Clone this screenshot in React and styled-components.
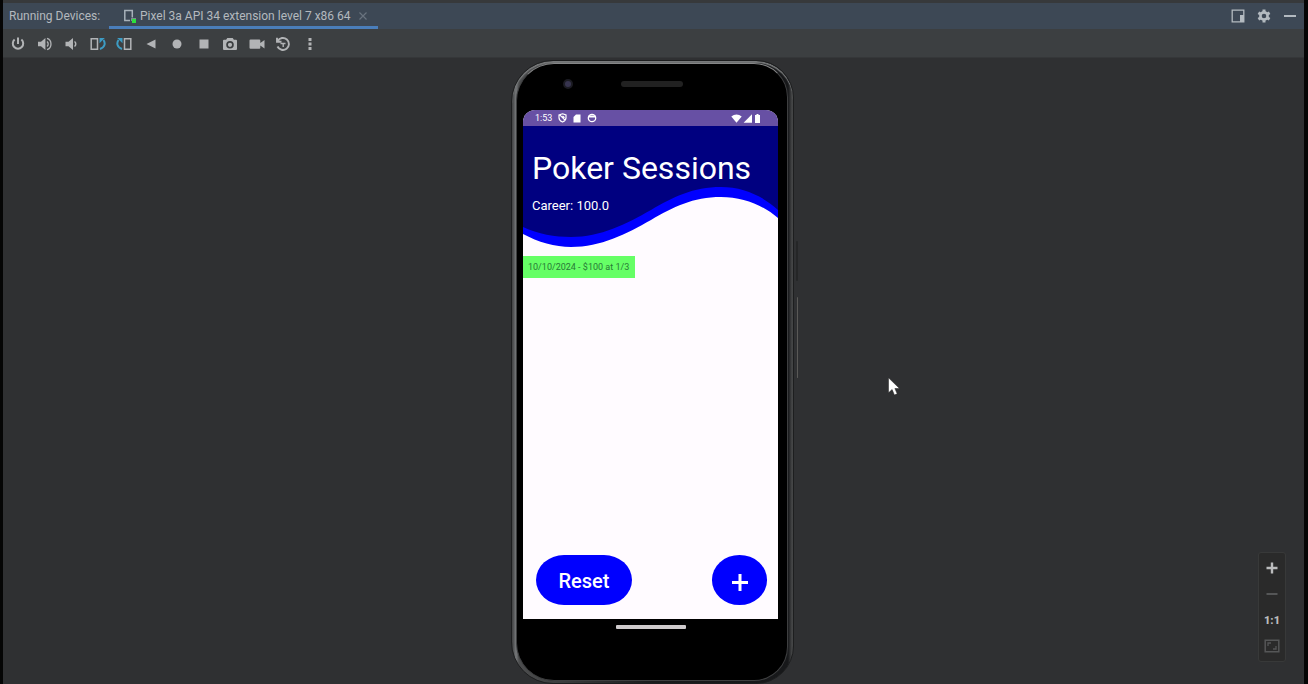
import React from "react";
import styled, { createGlobalStyle } from "styled-components";

const GlobalStyle = createGlobalStyle`
  *, *::before, *::after { box-sizing: border-box; }
  html, body, #root { height: 100%; }
  body { margin: 0; background: #000; font-family: Roboto, "Liberation Sans", sans-serif; }
  button { border: 0; padding: 0; margin: 0; background: none; font: inherit; color: inherit; cursor: pointer; }
  h1, p, ul { margin: 0; padding: 0; }
  svg { display: block; }
`;

const Window = styled.div`
  display: flex;
  flex-direction: column;
  min-height: 100%;
  border: solid #050505;
  border-width: 0 4px 0 3px;
  background: #2f3032;
  overflow: hidden;
`;

const TitleBar = styled.header`
  display: flex;
  align-items: stretch;
  height: 29px;
  padding-left: 6px;
  border-top: 3px solid #37393b;
  background: #3d4855;
  color: #b4b9be;
  font-size: 12px;
`;

const BarLabel = styled.span`
  display: flex;
  align-items: center;
  width: 100px;
`;

const Tab = styled.div`
  display: flex;
  align-items: center;
  gap: 4px;
  height: 26px;
  padding: 2px 7px 0 14px;
  border-bottom: 3px solid #4a7ebb;
  white-space: nowrap;
`;

const TabButton = styled.button`
  display: flex;
  align-items: center;
  gap: 3px;
`;

const TabClose = styled.button`
  color: #69737e;
`;

const BarActions = styled.div`
  display: flex;
  align-items: center;
  gap: 10px;
  margin-left: auto;
  padding-right: 6px;
  color: #b3bac0;
`;

const Toolbar = styled.div`
  background: #3c3f41;
  height: 29px;
  padding: 0 4px;
  border-bottom: 1px solid #353739;
`;

const ToolGroup = styled.div`
  display: flex;
  align-items: center;
  justify-content: space-between;
  max-width: 314px;
  height: 30px;
`;

const ToolButton = styled.button`
  display: grid;
  place-items: center;
  width: 22px;
  height: 24px;
  color: #b2b4b6;
`;

const Stage = styled.main`
  position: relative;
  display: flex;
  justify-content: center;
  flex: 1;
  padding: 2px 2px 0 0;
`;

const Phone = styled.div`
  position: relative;
  display: flex;
  flex-direction: column;
  width: 283px;
  min-height: 600px;
  padding: 2px 5px 2px 4px;
  border: 1px solid #1d1e1f;
  border-radius: 42px 38px 38px 42px;
  background: linear-gradient(90deg, #3a3b3c 0, #77797b 4px, #4c4d4e 7px, #1a1b1c 50%, #17181a 276px, #454647 280px, #202122 283px);
  box-shadow: inset 0 2px 1px #77797a;
`;

const Bezel = styled.div`
  display: flex;
  flex-direction: column;
  flex: 1;
  padding: 0 9px 0 6px;
  border: 1px solid #3e3f40;
  border-top-color: #858687;
  border-radius: 38px 34px 34px 38px;
  background: #000;
`;

const Sensors = styled.div`
  display: flex;
  align-items: center;
  height: 46px;
  padding: 0 0 6px 40px;
  gap: 48px;
`;

const Camera = styled.span`
  width: 10px;
  height: 10px;
  border: 2px solid #1b1b22;
  border-radius: 50%;
  background: #37344f;
`;

const Speaker = styled.span`
  width: 62px;
  height: 6px;
  border-radius: 3px;
  background: #212121;
`;

const SideButton = styled.span`
  position: absolute;
  right: -5px;
  top: ${(p) => p.$top};
  width: ${(p) => p.$thickness};
  height: ${(p) => p.$length};
  border-radius: 1px;
  background: ${(p) => p.$color};
`;

const Screen = styled.div`
  display: flex;
  flex-direction: column;
  flex: 1;
  border-radius: 12px 12px 0 0;
  background: #fffbff;
  overflow: hidden;
`;

const StatusBar = styled.div`
  display: flex;
  align-items: center;
  justify-content: space-between;
  height: 16px;
  padding: 0 17px 0 12px;
  background: #6750a4;
  color: #fff;
  font-size: 9px;
`;

const StatusGroup = styled.div`
  display: flex;
  align-items: center;
  gap: ${(p) => p.$gap};
`;

const Hero = styled.section`
  position: relative;
  height: 122px;
  padding: 22px 9px 0;
  color: #fff;
`;

const Wave = styled.svg`
  position: absolute;
  inset: 0;
  width: 100%;
  height: 100%;
`;

const Title = styled.h1`
  position: relative;
  font-size: 32px;
  font-weight: 400;
  line-height: 40px;
  white-space: nowrap;
`;

const Career = styled.p`
  position: relative;
  padding-top: 9px;
  font-size: 13px;
  font-weight: 400;
  line-height: 18px;
`;

const Sessions = styled.ul`
  flex: 1;
  padding-top: 8px;
  list-style: none;
`;

const Session = styled.li`
  width: fit-content;
  padding: 0 6px 0 5px;
  background: #66ff66;
  color: #287a36;
  font-size: 9px;
  line-height: 22px;
`;

const Actions = styled.div`
  display: flex;
  justify-content: space-between;
  padding: 0 11px 14px 13px;
`;

const ActionButton = styled.button`
  display: grid;
  place-items: center;
  width: ${(p) => p.$width};
  height: 50px;
  padding-top: 2px;
  border-radius: 28px / 25px;
  background: #0000ff;
  color: #fff;
  font-size: 20px;
  font-weight: 500;
`;

const Chin = styled.div`
  display: flex;
  justify-content: center;
  height: 61px;
  padding-top: 6px;
`;

const HomeBar = styled.span`
  width: 70px;
  height: 4px;
  border-radius: 1px;
  background: #cfcbcd;
`;

const ZoomPanel = styled.div`
  position: absolute;
  right: 18px;
  bottom: 22px;
  display: flex;
  flex-direction: column;
  align-items: center;
  width: 28px;
  padding: 2px 0;
  border: 1px solid #383939;
  border-radius: 3px;
  background: #2a2a2a;
`;

const ZoomButton = styled.button`
  display: grid;
  place-items: center;
  width: 26px;
  height: 26px;
  color: ${(p) => (p.$dim ? "#555657" : "#bbbcbd")};
  font-size: 11px;
  font-weight: 900;
`;

const Pointer = styled.svg`
  position: absolute;
  left: 68%;
  top: 51%;
`;

function Icon({ size = 16, children }) {
  return (
    <svg width={size} height={size} viewBox="0 0 16 16" fill="none" stroke="currentColor" strokeWidth="2" aria-hidden="true">
      {children}
    </svg>
  );
}

const solid = { fill: "currentColor", stroke: "none" };

const tools = [
  ["Power", <><path d="M8 1.5v6.5M4.6 3.5a5.2 5.2 0 1 0 6.8 0" /></>],
  ["Volume up", <><path {...solid} d="M1 5.7h3L8.4 2v12L4 10.3H1z" /><path strokeWidth="1.3" d="M10 5.5c1.6 1.3 1.6 3.7 0 5M10 2.4c5.3 1.4 5.3 9.8 0 11.2" /></>],
  ["Volume down", <><path {...solid} d="M2.5 5.7h3L10 2v12l-4.500-3.700h-3z" /><path strokeWidth="1.5" d="M11.500 5.500c1.700 1.300 1.700 3.700 0 5" /></>],
  ["Rotate left", <><path strokeWidth="1.500" d="M1.200 2.700h6.300v10.600H1.200z" /><path stroke="#3d9cc4" d="M10 13c5-1.500 5.600-6 3.500-9" /><path fill="#3d9cc4" stroke="none" d="M9.500 2h5.300l-5.300 5.300z" /></>],
  ["Rotate right", <><path strokeWidth="1.500" d="M8.500 2.700h6.300v10.600H8.500z" /><path stroke="#3d9cc4" d="M6 13C1 11.500.4 7 2.500 4" /><path fill="#3d9cc4" stroke="none" d="M6.500 2H1.200l5.300 5.300z" /></>],
  ["Back", <path {...solid} d="M12.500 3.500v9L3.500 8z" />],
  ["Home", <circle {...solid} cx="8" cy="8" r="4.500" />],
  ["Overview", <path {...solid} d="M3.500 3.500h9v9h-9z" />],
  ["Screenshot", <path {...solid} fillRule="evenodd" d="M5.300 2h5.400l1.200 1.800H14a1 1 0 0 1 1 1V13a1 1 0 0 1-1 1H2a1 1 0 0 1-1-1V4.800a1 1 0 0 1 1-1h2.100zM8 5a3.800 3.800 0 1 0 0 7.600A3.800 3.800 0 0 0 8 5zm0 1.700a2.100 2.100 0 1 1 0 4.200 2.100 2.100 0 0 1 0-4.200z" />],
  ["Record", <path {...solid} d="M1.500 3.500h8.800a1 1 0 0 1 1 1V7L15.500 4v8.500l-4.200-3v2.300a1 1 0 0 1-1 1H1.500a1 1 0 0 1-1-1V4.500a1 1 0 0 1 1-1z" />],
  ["Snapshots", <><path strokeWidth="1.900" d="M2.700 5A6 6 0 1 1 2.500 10.500M2 1.700v4h4.500" /><path strokeWidth="1.400" d="M5.500 7.500h5M8.200 7.500V11" /></>],
  ["More", <path {...solid} d="M6.500 2h3v3h-3zM6.500 6.500h3v3h-3zM6.500 11h3v3h-3z" />],
];

function DeviceIcon() {
  return (
    <svg width="14" height="16" viewBox="0 0 14 16" fill="none" aria-hidden="true">
      <path d="M7 12.500H1.800v-10h7.500v7" stroke="#a8b1ba" strokeWidth="1.500" />
      <path d="M8 10h5v3H8z" fill="#7f8c92" />
      <path d="M9 11h4v4H9z" fill="#2be13d" />
    </svg>
  );
}

function StatusIcons() {
  return (
    <>
      <svg width="9" height="10" viewBox="0 0 9 10" fill="none" stroke="#fff" strokeWidth="1.200" aria-hidden="true">
        <path d="M4.500.8 8 2v2.800c0 2-1.500 3.400-3.500 4.200C2.500 8.200 1 6.800 1 4.800V2zM2 2.200l5 5M4.500 3l2 1.800" />
      </svg>
      <svg width="8" height="9" viewBox="0 0 8 9" fill="#fff" aria-hidden="true">
        <path d="M3 .5h4.500v8h-7V3z" />
      </svg>
      <svg width="10" height="10" viewBox="0 0 10 10" aria-hidden="true">
        <circle cx="5" cy="5" r="3.700" fill="none" stroke="#fff" strokeWidth="1.300" />
        <path d="M1.500 2.500h7v2h-7z" fill="#fff" />
      </svg>
    </>
  );
}

function PhoneDevice() {
  return (
    <Phone>
      <SideButton $top="29%" $length="40px" $thickness="2px" $color="#252627" />
      <SideButton $top="38%" $length="81px" $thickness="1px" $color="#5a5957" />
      <Bezel>
        <Sensors>
          <Camera />
          <Speaker />
        </Sensors>
        <Screen>
          <StatusBar>
            <StatusGroup $gap="6px">
              <span>1:53</span>
              <StatusIcons />
            </StatusGroup>
            <StatusGroup $gap="1px">
              <svg width="11" height="9" viewBox="0 0 11 9" fill="#fff" aria-hidden="true"><path d="M.3 2.500C3.500-.3 7.500-.3 10.700 2.500L5.500 8.800z" /></svg>
              <svg width="10" height="9" viewBox="0 0 10 9" fill="#fff" aria-hidden="true"><path d="M9 .3v8.400H.6z" /></svg>
              <svg width="7" height="9" viewBox="0 0 7 9" fill="#fff" aria-hidden="true"><path d="M2.500 0h2v1H6v8H1V1h1.500z" /></svg>
            </StatusGroup>
          </StatusBar>
          <Hero>
            <Wave viewBox="0 0 255 122" preserveAspectRatio="none" aria-hidden="true">
              <path fill="#0000ff" d="M0 0V108C15 116 32 121 48 121C78 121 103 108 128 94C150 81 170 71 198 71C220 71 240 79 255 92V0Z" />
              <path fill="#000080" d="M0 0V101C15 108 32 111 48 111C78 111 103 98 128 84C150 71 170 61 198 61C220 61 240 70 255 84V0Z" />
            </Wave>
            <Title>Poker Sessions</Title>
            <Career>Career: 100.0</Career>
          </Hero>
          <Sessions>
            <Session>10/10/2024 - $100 at 1/3</Session>
          </Sessions>
          <Actions>
            <ActionButton $width="96px">Reset</ActionButton>
            <ActionButton $width="55px" aria-label="Add session">
              <svg width="18" height="22" viewBox="0 0 18 22" fill="none" stroke="#fff" strokeWidth="3" aria-hidden="true"><path d="M1 12.500h16M9 4v17" /></svg>
            </ActionButton>
          </Actions>
        </Screen>
        <Chin>
          <HomeBar />
        </Chin>
      </Bezel>
    </Phone>
  );
}

export default function App() {
  return (
    <Window>
      <GlobalStyle />
      <TitleBar>
        <BarLabel>Running Devices:</BarLabel>
        <Tab>
          <TabButton>
            <DeviceIcon />
            Pixel 3a API 34 extension level 7 x86 64
          </TabButton>
          <TabClose aria-label="Close tab">
            <Icon><path strokeWidth="1.200" d="m4.500 4.500 7 7m0-7-7 7" /></Icon>
          </TabClose>
        </Tab>
        <BarActions>
          <button aria-label="Window mode">
            <Icon><path strokeWidth="1.300" d="M2.200 2.200h11.600v11.600H2.200z" /><path {...solid} d="M10 7h4v7h-4z" /></Icon>
          </button>
          <button aria-label="Settings">
            <Icon><circle cx="8" cy="8" r="3.600" strokeWidth="2.600" /><path strokeWidth="3" d="M8 1.500v2.200M8 12.300v2.200M2.400 4.800l1.900 1.100M11.700 10.100l1.900 1.100M2.400 11.200l1.900-1.100M11.700 5.900l1.900-1.100" /></Icon>
          </button>
          <button aria-label="Hide">
            <Icon><path d="M2 8h12" /></Icon>
          </button>
        </BarActions>
      </TitleBar>
      <Toolbar>
        <ToolGroup>
          {tools.map(([name, glyph]) => (
            <ToolButton key={name} aria-label={name}><Icon>{glyph}</Icon></ToolButton>
          ))}
        </ToolGroup>
      </Toolbar>
      <Stage>
        <PhoneDevice />
        <Pointer width="12" height="19" viewBox="0 0 12 19" aria-hidden="true">
          <path d="M.5.800v15l3.600-3.300 2.300 5.500 2.800-1.200-2.300-5.300h4.600z" fill="#fff" stroke="#222" strokeWidth=".5" />
        </Pointer>
        <ZoomPanel>
          <ZoomButton aria-label="Zoom in"><Icon><path strokeWidth="2.400" d="M2.500 8h11M8 2.500v11" /></Icon></ZoomButton>
          <ZoomButton $dim aria-label="Zoom out"><Icon><path d="M2.500 8h11" /></Icon></ZoomButton>
          <ZoomButton>1:1</ZoomButton>
          <ZoomButton $dim aria-label="Fit to window"><Icon><path strokeWidth="1.500" d="M1.200 2.200h13.600v11.600H1.200z" /><path strokeWidth="1.300" d="M4 8V5h3M12 8v3H9" /></Icon></ZoomButton>
        </ZoomPanel>
      </Stage>
    </Window>
  );
}
